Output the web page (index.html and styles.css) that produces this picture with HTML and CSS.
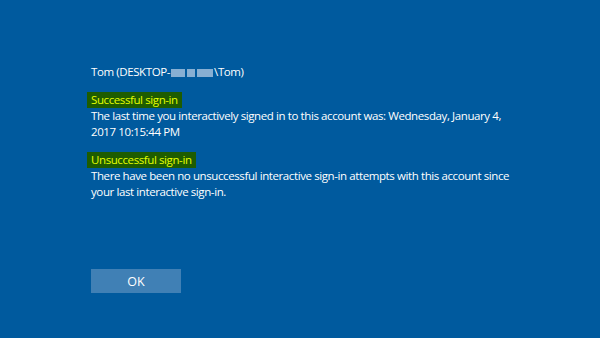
FILE: index.html
```html
<!DOCTYPE html>
<html>
<head>
<meta charset="utf-8">
<link rel="stylesheet" href="styles.css">
</head>
<body>
<main class="panel">
  <p class="user">Tom (DESKTOP-<span class="blur"><span class="b1"></span><span class="b2"></span><span class="b3"></span></span>\Tom)</p>
  <section class="block">
    <h2 class="tag">Successful sign-in</h2>
    <p class="text">The last time you interactively signed in to this account was: Wednesday, January 4,<br>2017 10:15:44 PM</p>
  </section>
  <section class="block">
    <h2 class="tag">Unsuccessful sign-in</h2>
    <p class="text">There have been no unsuccessful interactive sign-in attempts with this account since<br>your last interactive sign-in.</p>
  </section>
  <button class="ok">OK</button>
</main>
</body>
</html>
```
FILE: styles.css
```css
html, body {
  margin: 0;
  padding: 0;
  background: #005a9e;
  width: 600px;
  height: 338px;
  overflow: hidden;
}
.panel {
  padding: 64px 0 0 91px;
  font-family: "Open Sans", "Noto Sans", sans-serif;
  font-size: 11.5px;
  letter-spacing: -0.4px;
  color: #ffffff;
  display: flex;
  flex-direction: column;
  align-items: flex-start;
}
.user {
  margin: 0;
  line-height: 16px;
}
.blur {
  display: inline-flex;
  align-items: center;
  vertical-align: -1px;
  height: 10px;
  margin: 0 1px;
}
.blur span {
  display: inline-block;
  height: 8px;
  background: #a9c4e0;
  opacity: 0.8;
}
.b1 { width: 14px; }
.b2 { width: 8px; margin-left: 2px; }
.b3 { width: 16px; margin-left: 2px; }
.block {
  margin-top: 12px;
}
.tag {
  margin: 0 0 0 -4px;
  display: inline-block;
  background: #1e5c00;
  color: #e6ff00;
  font-weight: normal;
  font-size: 11.5px;
  line-height: 16px;
  padding: 0 4px;
}
.text {
  margin: 0;
  line-height: 16px;
}
.ok {
  margin-top: 69px;
  width: 90px;
  height: 24px;
  background: #4080b5;
  border: none;
  color: #ffffff;
  font-family: "Open Sans", "Noto Sans", sans-serif;
  font-size: 12.5px;
  padding: 0;
}
```
